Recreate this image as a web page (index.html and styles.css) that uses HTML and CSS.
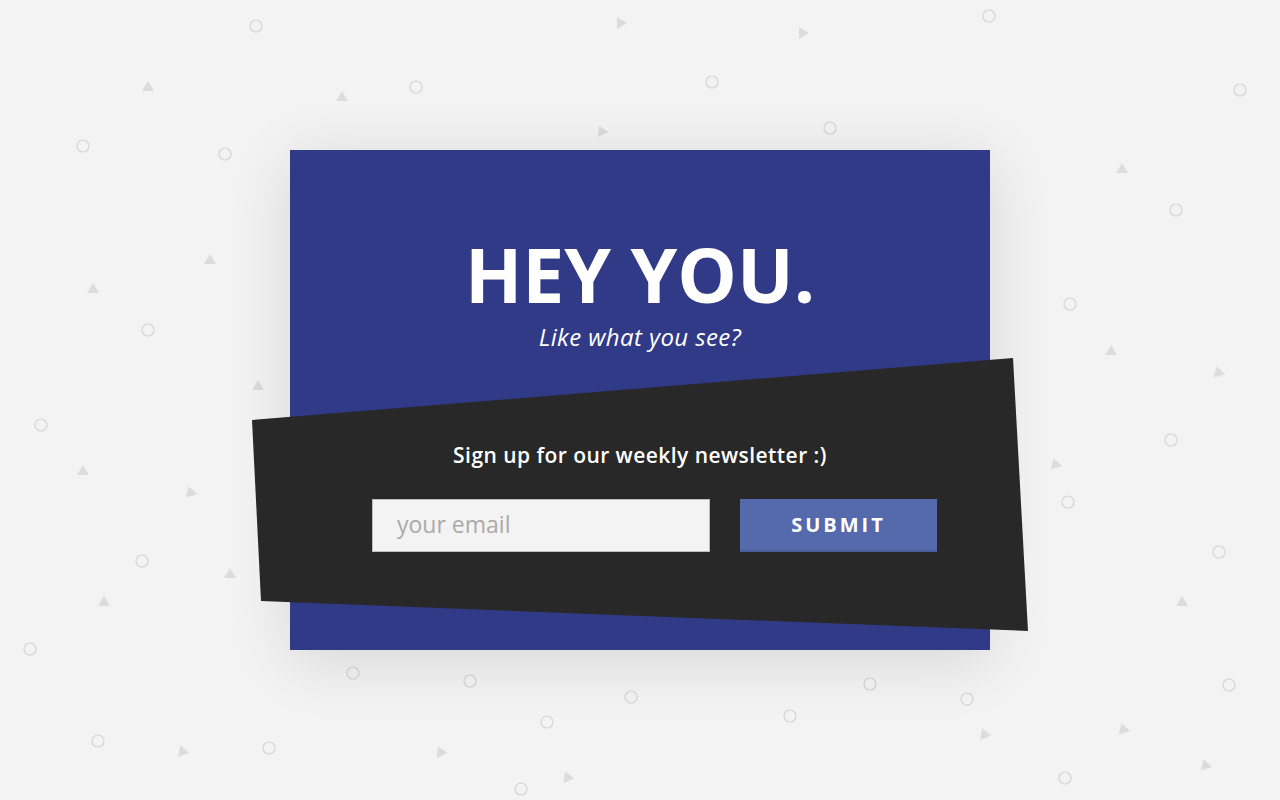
FILE: index.html
```html
<!DOCTYPE html>
<html lang="en">
<head>
<meta charset="utf-8">
<title>Newsletter</title>
<link rel="stylesheet" href="styles.css">
</head>
<body>
<svg class="bg" width="1280" height="800" viewBox="0 0 1280 800" aria-hidden="true">
  <defs>
    <path id="tri" d="M-6,5 L6,5 L0,-5 Z"/>
  </defs>
  <g class="circles">
    <circle cx="256" cy="26" r="6"/><circle cx="989" cy="16" r="6"/><circle cx="712" cy="82" r="6"/>
    <circle cx="416" cy="87" r="6"/><circle cx="1240" cy="90" r="6"/><circle cx="83" cy="146" r="6"/>
    <circle cx="225" cy="154" r="6"/><circle cx="830" cy="128" r="6"/><circle cx="1176" cy="210" r="6"/>
    <circle cx="1070" cy="304" r="6"/><circle cx="148" cy="330" r="6"/><circle cx="41" cy="425" r="6"/>
    <circle cx="1171" cy="440" r="6"/><circle cx="1068" cy="502" r="6"/><circle cx="142" cy="561" r="6"/>
    <circle cx="1219" cy="552" r="6"/><circle cx="30" cy="649" r="6"/><circle cx="353" cy="673" r="6"/>
    <circle cx="470" cy="681" r="6"/><circle cx="1229" cy="685" r="6"/><circle cx="870" cy="684" r="6"/>
    <circle cx="631" cy="697" r="6"/><circle cx="967" cy="699" r="6"/><circle cx="547" cy="722" r="6"/>
    <circle cx="790" cy="716" r="6"/><circle cx="98" cy="741" r="6"/><circle cx="269" cy="748" r="6"/>
    <circle cx="1065" cy="778" r="6"/><circle cx="521" cy="789" r="6"/>
  </g>
  <g class="tris">
    <use href="#tri" transform="translate(622,23) rotate(90)"/>
    <use href="#tri" transform="translate(804,33) rotate(90)"/>
    <use href="#tri" transform="translate(148,86)"/>
    <use href="#tri" transform="translate(342,96)"/>
    <use href="#tri" transform="translate(601,130) rotate(-25)"/>
    <use href="#tri" transform="translate(1122,168)"/>
    <use href="#tri" transform="translate(210,259)"/>
    <use href="#tri" transform="translate(93,288)"/>
    <use href="#tri" transform="translate(1111,350)"/>
    <use href="#tri" transform="translate(1218,371) rotate(-15)"/>
    <use href="#tri" transform="translate(258,385)"/>
    <use href="#tri" transform="translate(83,470)"/>
    <use href="#tri" transform="translate(1055,463) rotate(-18)"/>
    <use href="#tri" transform="translate(190,491) rotate(-18)"/>
    <use href="#tri" transform="translate(230,573)"/>
    <use href="#tri" transform="translate(104,601)"/>
    <use href="#tri" transform="translate(1182,601)"/>
    <use href="#tri" transform="translate(182,750) rotate(-20)"/>
    <use href="#tri" transform="translate(440,751) rotate(-27)"/>
    <use href="#tri" transform="translate(567,776) rotate(-22)"/>
    <use href="#tri" transform="translate(984,733) rotate(-22)"/>
    <use href="#tri" transform="translate(1123,728) rotate(-18)"/>
    <use href="#tri" transform="translate(1205,764) rotate(-18)"/>
  </g>
</svg>

<main class="card">
  <header class="card-head">
    <h1 class="title">HEY YOU.</h1>
    <p class="subtitle">Like what you see?</p>
  </header>
  <section class="band">
    <p class="band-text">Sign up for our weekly newsletter :)</p>
    <form class="signup" onsubmit="return false;">
      <input class="email" type="text" placeholder="your email">
      <button class="submit" type="submit">SUBMIT</button>
    </form>
  </section>
</main>
</body>
</html>
```

FILE: styles.css
```css
* { box-sizing: border-box; }

html, body {
  margin: 0;
  padding: 0;
  width: 1280px;
  height: 800px;
  overflow: hidden;
}

body {
  background: #f3f3f3;
  font-family: "Open Sans", "Noto Sans", sans-serif;
  position: relative;
  padding-top: 150px;
}

.bg {
  position: absolute;
  left: 0;
  top: 0;
  z-index: 0;
}

.circles circle {
  fill: none;
  stroke: #d4d4d4;
  stroke-width: 1.2;
}

.tris use {
  fill: #dcdcdc;
}

.card {
  position: relative;
  z-index: 1;
  width: 700px;
  height: 500px;
  margin: 0 auto;
  background: #303a87;
  box-shadow: 0 10px 60px rgba(0, 0, 0, 0.12);
  display: flex;
  flex-direction: column;
}

.card-head {
  height: 208px;
  display: flex;
  flex-direction: column;
  align-items: center;
  padding-top: 84px;
  color: #fff;
}

.title {
  margin: 0;
  font-size: 75px;
  font-weight: 700;
  line-height: 80px;
  letter-spacing: 0;
}

.subtitle {
  margin: 7px 0 0;
  font-size: 24px;
  font-style: italic;
  line-height: 32px;
  letter-spacing: 0.4px;
}

.band {
  position: relative;
  margin: 0 -38px;
  height: 273px;
  display: flex;
  flex-direction: column;
  align-items: center;
}

.band::before {
  content: "";
  position: absolute;
  inset: 0;
  background: #282828;
  clip-path: polygon(0 62px, 761px 0, 776px 273px, 9px 243px);
  z-index: -1;
}

.band-text {
  margin: 82px 0 0;
  color: #fff;
  font-size: 21px;
  font-weight: 600;
  letter-spacing: 0.45px;
  line-height: 30px;
}

.signup {
  margin-top: 29px;
  display: flex;
  gap: 30px;
  align-self: flex-start;
  padding-left: 120px;
}

.email {
  width: 338px;
  height: 53px;
  background: #f3f3f3;
  border: 1px solid #bdbdbd;
  padding: 0 0 3px 24px;
  font-family: "Open Sans", "Noto Sans", sans-serif;
  font-size: 23px;
  color: #333;
  outline: none;
}

.email::placeholder {
  color: #aaa;
}

.submit {
  width: 197px;
  height: 53px;
  background: #5569ad;
  border: none;
  border-bottom: 2px solid #4a5b98;
  color: #fff;
  font-family: "Open Sans", "Noto Sans", sans-serif;
  font-size: 20px;
  font-weight: 700;
  letter-spacing: 3px;
  padding: 0;
  cursor: pointer;
}
```
